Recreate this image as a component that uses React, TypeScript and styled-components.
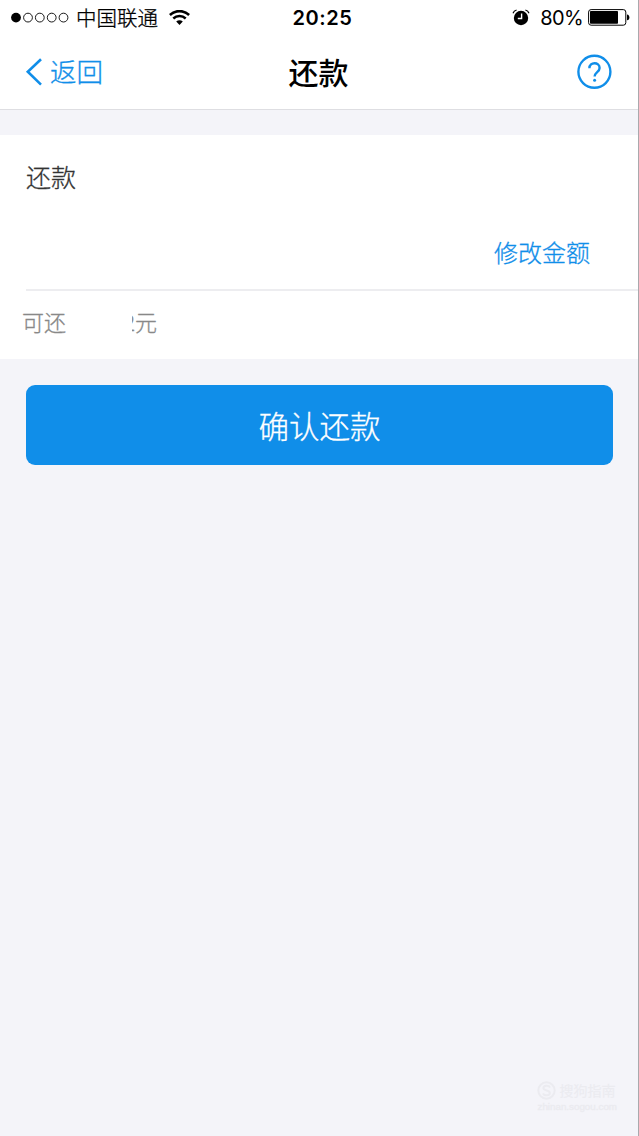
import React from "react";
import styled, { createGlobalStyle } from "styled-components";

const BLUE = "#108ee9";
const CJK = '"Noto Sans CJK SC", sans-serif';

const GlobalStyle = createGlobalStyle`
  * { box-sizing: border-box; }
  body { margin: 0; background: #f4f4f9; }
`;

const Screen = styled.main`
  display: flex;
  flex-direction: column;
  height: 1136px;
  border-right: 1px solid #a9a9ad;
  background: #f4f4f9;
  font-family: ${CJK};
  font-weight: 300;
  -webkit-text-stroke-width: 0.3px;
`;

const StatusBar = styled.div`
  display: grid;
  grid-template-columns: 1fr auto 1fr;
  align-items: center;
  height: 35px;
  padding: 0 8px 0 11px;
  background: #fff;
  color: #000;
`;

const StatusGroup = styled.div<{ $end?: boolean }>`
  display: flex;
  align-items: center;
  justify-content: ${(p) => (p.$end ? "flex-end" : "flex-start")};
`;

const Carrier = styled.span`
  margin: 0 11px 0 7px;
  padding-bottom: 2px;
  font-size: 20.5px;
  line-height: 30px;
`;

const Time = styled.span`
  margin-left: 4px;
  font: 600 20px/30px Inter, sans-serif;
  letter-spacing: 0.6px;
  -webkit-text-stroke-width: 0;
`;

const Percent = styled.span`
  margin: 0 5px 0 10px;
  font: 400 20px/30px Inter, sans-serif;
  letter-spacing: -0.6px;
  -webkit-text-stroke-width: 0;
`;

const NavBar = styled.header`
  display: grid;
  grid-template-columns: 1fr auto 1fr;
  align-items: center;
  height: 75px;
  padding: 0 26px 0 25px;
  border-bottom: 1px solid #dedee2;
  background: #fff;
`;

const BackLink = styled.a`
  display: flex;
  align-items: center;
  gap: 7px;
  color: ${BLUE};
  font-size: 26.5px;
  line-height: 40px;
`;

const BackText = styled.span`
  padding-bottom: 2px;
`;

const Title = styled.h1`
  margin: 0;
  padding-bottom: 3px;
  color: #000;
  font-size: 30px;
  font-weight: 500;
  line-height: 44px;
  -webkit-text-stroke-width: 0;
`;

const HelpButton = styled.a`
  display: flex;
  justify-self: end;
`;

const Card = styled.section`
  margin-top: 25px;
  height: 224px;
  background: #fff;
`;

const AmountRow = styled.div`
  display: flex;
  flex-direction: column;
  justify-content: space-between;
  height: 156px;
  margin-left: 26px;
  padding: 21px 48px 17px 0;
  border-bottom: 2px solid #ededf0;
`;

const Label = styled.span`
  color: #333;
  font-size: 25px;
  line-height: 40px;
`;

const EditLink = styled.a`
  align-self: flex-end;
  color: ${BLUE};
  font-size: 24px;
  line-height: 40px;
`;

const BalanceRow = styled.div`
  display: flex;
  align-items: center;
  height: 60px;
  padding-left: 22px;
  color: #888;
  font-size: 22px;
  line-height: 32px;
`;

const MaskedAmount = styled.span`
  display: flex;
  justify-content: flex-end;
  width: 3px;
  margin-left: 66px;
  overflow: hidden;
`;

const ConfirmButton = styled.button`
  height: 80px;
  margin: 26px 25px 0 26px;
  padding: 0;
  border: 0;
  border-radius: 9px;
  background: ${BLUE};
  color: #fff;
  font: 300 30.5px/44px ${CJK};
`;

const Watermark = styled.footer`
  display: flex;
  flex-direction: column;
  align-self: flex-end;
  margin: auto 21px 22px 0;
  color: #ebebf0;
`;

const WatermarkBrand = styled.div`
  display: flex;
  align-items: center;
  gap: 3px;
  padding-left: 2px;
  font-size: 14px;
  line-height: 20px;
`;

const WatermarkSite = styled.div`
  padding-left: 2px;
  font: 9.8px/14px "Liberation Sans", sans-serif;
`;

const SignalIcon = () => (
  <svg width="58" height="12" viewBox="0 0 58 12">
    <circle cx="5" cy="5.6" r="4.9" />
    {[17, 28.8, 40.7, 52.5].map((x) => (
      <circle key={x} cx={x} cy="5.6" r="4.4" fill="none" stroke="#000" strokeWidth=".9" />
    ))}
  </svg>
);

const WifiIcon = () => (
  <svg width="21" height="16" viewBox="0 0 21 16" fill="none" stroke="#000">
    <path d="M.9 5C6.2-.2 14.8-.2 20.1 5" strokeWidth="2.6" />
    <path d="M4.3 8.5C7.8 5.3 13.2 5.3 16.7 8.5" strokeWidth="2.5" />
    <path d="M7.2 11.6c1.9-1.8 4.7-1.8 6.6 0L10.5 15z" fill="#000" stroke="none" />
  </svg>
);

const AlarmIcon = () => (
  <svg width="18" height="18" viewBox="0 0 18 18" fill="none">
    <circle cx="9" cy="9" r="7.2" fill="#000" />
    <path d="M1 4.2C1.6 2.6 2.9 1.5 4.6 1M17 4.2C16.4 2.6 15.1 1.5 13.4 1" stroke="#000" strokeWidth="1.2" />
    <path d="M9.6 4.4v5.1H5.8" stroke="#fff" strokeWidth="1.4" />
  </svg>
);

const BatteryIcon = () => (
  <svg width="42" height="17" viewBox="0 0 42 17">
    <rect x=".6" y=".6" width="37.2" height="15.6" rx="2.5" fill="none" stroke="#000" strokeWidth="1" />
    <rect x="2" y="2" width="28" height="12.8" rx=".8" />
    <path d="M39 5.5c3.2.4 3.2 5.4 0 5.8z" />
  </svg>
);

const BackIcon = () => (
  <svg width="18" height="28" viewBox="0 0 18 28" fill="none" stroke={BLUE} strokeWidth="2.6">
    <path d="M16 1.2 2.8 13.8 16 26.6" />
  </svg>
);

const HelpIcon = () => (
  <svg width="36" height="36" viewBox="0 0 36 36" fill="none" stroke={BLUE}>
    <circle cx="18.4" cy="17.8" r="16" strokeWidth="2.4" />
    <path d="M13.4 14.2c0-6.6 10.2-6.6 10.2-.3 0 4.2-5 4.2-5 8.7" strokeWidth="2.4" />
    <circle cx="18.6" cy="26.2" r="1.5" fill={BLUE} stroke="none" />
  </svg>
);

const BrandIcon = () => (
  <svg width="19" height="19" viewBox="0 0 19 19" fill="none" stroke="currentColor" strokeWidth="2">
    <circle cx="9.5" cy="9.5" r="8.2" />
    <path d="M13 6.6C12 4 6.4 4.2 6.4 7.1c0 3.2 6.4 1.6 6.4 4.8 0 3-5.8 3-6.8.4" />
  </svg>
);

export default function App() {
  return (
    <>
      <GlobalStyle />
      <Screen>
        <StatusBar>
          <StatusGroup>
            <SignalIcon />
            <Carrier>中国联通</Carrier>
            <WifiIcon />
          </StatusGroup>
          <Time>20:25</Time>
          <StatusGroup $end>
            <AlarmIcon />
            <Percent>80%</Percent>
            <BatteryIcon />
          </StatusGroup>
        </StatusBar>
        <NavBar>
          <BackLink>
            <BackIcon />
            <BackText>返回</BackText>
          </BackLink>
          <Title>还款</Title>
          <HelpButton aria-label="帮助">
            <HelpIcon />
          </HelpButton>
        </NavBar>
        <Card>
          <AmountRow>
            <Label>还款</Label>
            <EditLink>修改金额</EditLink>
          </AmountRow>
          <BalanceRow>
            可还
            <MaskedAmount>2</MaskedAmount>
            元
          </BalanceRow>
        </Card>
        <ConfirmButton>确认还款</ConfirmButton>
        <Watermark>
          <WatermarkBrand>
            <BrandIcon />
            搜狗指南
          </WatermarkBrand>
          <WatermarkSite>zhinan.sogou.com</WatermarkSite>
        </Watermark>
      </Screen>
    </>
  );
}
